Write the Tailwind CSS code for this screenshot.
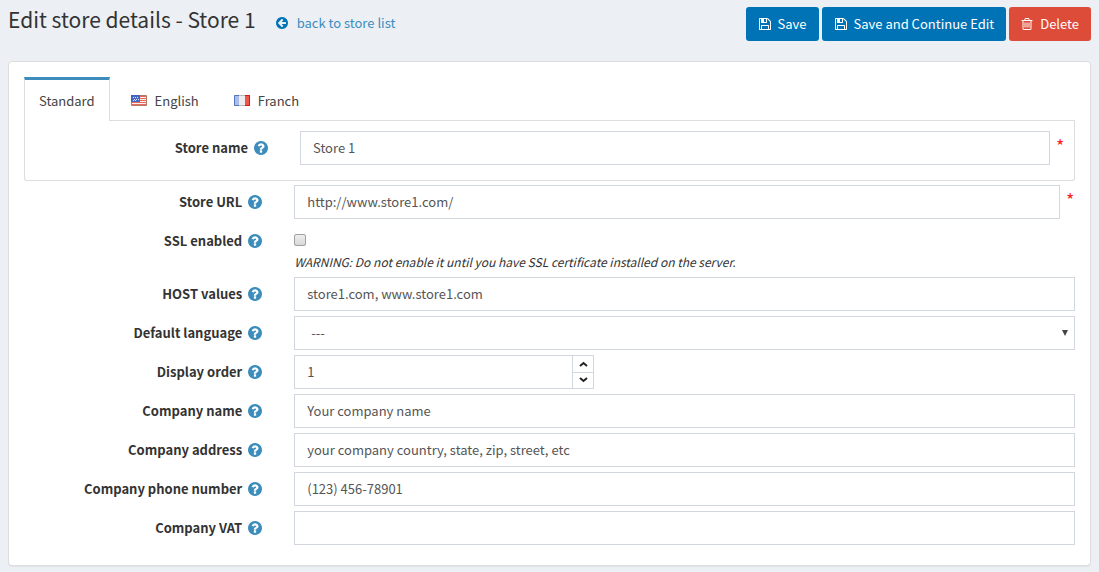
<!DOCTYPE html>
<html lang="en">
<head>
<meta charset="utf-8">
<title>Edit store details</title>
<script src="https://cdn.jsdelivr.net/npm/@tailwindcss/browser@4"></script>
</head>
<body class="min-h-screen bg-[#ecf0f5] font-['Noto_Sans_CJK_SC',sans-serif] text-[13px] leading-5 text-[#333]">
<svg class="hidden" aria-hidden="true">
  <symbol id="help" viewBox="128 128 1536 1536"><path d="M1024 1376v-192q0-14-9-23t-23-9h-192q-14 0-23 9t-9 23v192q0 14 9 23t23 9h192q14 0 23-9t9-23zm256-672q0-88-55.500-163t-138.500-116-170-41q-243 0-371 213-15 24 8 42l132 100q7 6 19 6 16 0 25-12 53-68 86-92 34-24 86-24 48 0 85.500 26t37.500 59q0 38-20 61t-68 45q-63 28-115.500 86.500t-52.500 125.500v36q0 14 9 23t23 9h192q14 0 23-9t9-23q0-19 21.500-49.500t54.500-49.500q32-18 49-28.500t46-35 44.500-48 28-60.500 12.500-81zm384 192q0 209-103 385.500t-279.500 279.500-385.500 103-385.500-103-279.500-279.500-103-385.500 103-385.500 279.500-279.500 385.500-103 385.500 103 279.500 279.500 103 385.500z"/></symbol>
  <symbol id="floppy" viewBox="0 0 1792 1792"><path d="M512 1536h768v-384h-768v384zm896 0h128v-896q0-14-10-38.500t-20-34.500l-281-281q-10-10-34-20t-39-10v416q0 40-28 68t-68 28h-576q-40 0-68-28t-28-68v-416h-128v1280h128v-416q0-40 28-68t68-28h832q40 0 68 28t28 68v416zm-384-928v-320q0-13-9.500-22.500t-22.500-9.500h-192q-13 0-22.500 9.500t-9.500 22.500v320q0 13 9.500 22.500t22.500 9.500h192q13 0 22.500-9.500t9.500-22.500zm640 32v928q0 40-28 68t-68 28h-1344q-40 0-68-28t-28-68v-1344q0-40 28-68t68-28h928q40 0 88 20t76 48l280 280q28 28 48 76t20 88z"/></symbol>
</svg>

<header class="flex items-start justify-between pt-[5px] pr-2 pb-5 pl-2">
  <h1 class="flex items-center text-[21px] leading-7">Edit store details - Store 1
    <small class="ml-5 flex items-center gap-[9px] pt-2 text-[13px] leading-5 text-[#3c8dbc]">
      <svg class="size-3 fill-[#0073b7]" viewBox="128 128 1536 1536"><path d="M1408 960v-128q0-26-19-45t-45-19h-502l189-189q19-19 19-45t-19-45l-91-91q-18-18-45-18t-45 18l-362 362-91 91q-18 18-18 45t18 45l91 91 362 362q18 18 45 18t45-18l91-91q18-18 18-45t-18-45l-189-189h502q26 0 45-19t19-45zm256-64q0 209-103 385.500t-279.500 279.500-385.500 103-385.500-103-279.500-279.500-103-385.500 103-385.500 279.500-279.500 385.500-103 385.500 103 279.500 279.500 103 385.500z"/></svg>
      <a href="#">back to store list</a>
    </small>
  </h1>
  <div class="mt-[2px] flex gap-[3px] text-white">
    <button class="flex h-[34px] items-center gap-[6px] rounded-[3px] bg-[#0073b7] px-3"><svg class="size-[14px] fill-current"><use href="#floppy"/></svg>Save</button>
    <button class="flex h-[34px] items-center gap-[6px] rounded-[3px] bg-[#0073b7] px-3"><svg class="size-[14px] fill-current"><use href="#floppy"/></svg>Save and Continue Edit</button>
    <button class="flex h-[34px] items-center gap-[7px] rounded-[3px] bg-[#dd4b39] px-3"><svg class="h-[14px] w-3 fill-current" viewBox="128 0 1536 1792"><path d="M704 736v576q0 14-9 23t-23 9h-64q-14 0-23-9t-9-23v-576q0-14 9-23t23-9h64q14 0 23 9t9 23zm256 0v576q0 14-9 23t-23 9h-64q-14 0-23-9t-9-23v-576q0-14 9-23t23-9h64q14 0 23 9t9 23zm256 0v576q0 14-9 23t-23 9h-64q-14 0-23-9t-9-23v-576q0-14 9-23t23-9h64q14 0 23 9t9 23zm128 724v-948h-896v948q0 22 7 40.500t14.500 27 10.500 8.500h832q3 0 10.500-8.500t14.500-27 7-40.500zm-672-1076h448l-48-117q-7-9-17-11h-317q-10 2-17 11zm928 32v64q0 14-9 23t-23 9h-96v948q0 83-47 143.500t-113 60.500h-832q-66 0-113-58.500t-47-141.500v-952h-96q-14 0-23-9t-9-23v-64q0-14 9-23t23-9h309l70-167q15-37 54-63t79-26h320q40 0 79 26t54 63l70 167h309q14 0 23 9t9 23z"/></svg>Delete</button>
  </div>
</header>

<main class="mx-2 rounded border border-[#ddd] bg-white pt-[15px] pb-5 shadow-[0_1px_1px_rgba(0,0,0,0.05)]">
  <form>
    <section class="mx-[15px]">
      <nav class="flex text-[#444]">
        <button type="button" class="h-11 border-x border-t-3 border-x-[#ddd] border-t-[#3c8dbc] px-[14px] pt-px">Standard</button>
        <div class="flex flex-1 border-b border-[#ddd]">
          <button type="button" class="flex items-center gap-2 pt-1 pr-[14px] pl-[21px]">
            <svg class="h-[11px] w-4" viewBox="0 0 16 11"><path fill="#f7eeee" d="M0 0h16v11H0z"/><path fill="#e8685a" d="M0 1h16v1H0zM0 3h16v1H0zM0 5h16v1H0zM0 7h16v1H0zM0 9h16v1H0z"/><path fill="#4468c4" d="M0 0h9v7H0z"/><path fill="#dce6fa" d="M2 2h1v1H2zM4 2h1v1H4zM6 2h1v1H6zM3 4h1v1H3zM5 4h1v1H5zM7 4h1v1H7zM2 5h1v1H2zM4 5h1v1H4z"/><path fill="none" stroke="#b5796a" d="M.5 7v3.500h15V.5H9"/><path fill="none" stroke="#4660b5" d="M.5 7V.5H9"/></svg>English</button>
          <button type="button" class="flex items-center gap-2 pt-1 pr-[14px] pl-[21px]">
            <svg class="h-[11px] w-4" viewBox="0 0 16 11"><path fill="#a9bde8" d="M0 0h5v11H0z"/><path fill="#ededed" d="M5 0h6v11H5z"/><path fill="#f0564c" d="M11 0h5v11h-5z"/><path fill="none" stroke="#5878bd" d="M5 .5H.5v10H5"/><path fill="none" stroke="#b9b9b9" d="M5 .5h6M5 10.500h6"/><path fill="none" stroke="#d01c14" d="M11 .5h4.500v10H11"/></svg>Franch</button>
        </div>
      </nav>
      <div class="flex rounded-b-[3px] border border-t-0 border-[#ddd] pt-[10px] pr-[9px] pb-[15px]">
        <div class="flex w-1/4 items-center justify-end gap-[6px] pr-[17px]"><label for="name" class="font-bold">Store name</label><svg class="size-[14px] fill-[#3c8dbc]"><use href="#help"/></svg></div>
        <div class="flex w-3/4 pl-[15px]"><input id="name" value="Store 1" class="h-[34px] min-w-0 flex-1 border border-[#d2d6de] px-3 pb-[2px] text-[#555]"><span class="w-[15px] pt-1 pl-[6px] text-[18px] text-[#f22]">*</span></div>
      </div>
    </section>

    <div class="mt-1 flex flex-col gap-[5px]">
      <div class="flex">
        <div class="flex w-1/4 items-center justify-end gap-[6px] pr-[17px]"><label for="url" class="font-bold">Store URL</label><svg class="size-[14px] fill-[#3c8dbc]"><use href="#help"/></svg></div>
        <div class="flex w-3/4 px-[15px]"><input id="url" value="http://www.store1.com/" class="h-[34px] min-w-0 flex-1 border border-[#d2d6de] px-3 pb-[2px] text-[#555]"><span class="w-[15px] pt-1 pl-[6px] text-[18px] text-[#f22]">*</span></div>
      </div>
      <div class="flex">
        <div class="flex h-[34px] w-1/4 items-center justify-end gap-[6px] pr-[17px]"><label for="ssl" class="font-bold">SSL enabled</label><svg class="size-[14px] fill-[#3c8dbc]"><use href="#help"/></svg></div>
        <div class="w-3/4 px-[15px] pt-[10px]"><input id="ssl" type="checkbox" class="block size-3 appearance-none rounded-xs border border-[#a0a0a0] bg-linear-to-b from-[#eee] to-[#d8d8d8]"><em class="mt-[6px] block text-[12px] leading-5">WARNING: Do not enable it until you have SSL certificate installed on the server.</em></div>
      </div>
      <div class="flex">
        <div class="flex w-1/4 items-center justify-end gap-[6px] pr-[17px]"><label for="host" class="font-bold">HOST values</label><svg class="size-[14px] fill-[#3c8dbc]"><use href="#help"/></svg></div>
        <div class="flex w-3/4 px-[15px]"><input id="host" value="store1.com, www.store1.com" class="h-[34px] min-w-0 flex-1 border border-[#d2d6de] px-3 pb-[2px] text-[#555]"></div>
      </div>
      <div class="flex">
        <div class="flex w-1/4 items-center justify-end gap-[6px] pr-[17px]"><label for="lang" class="font-bold">Default language</label><svg class="size-[14px] fill-[#3c8dbc]"><use href="#help"/></svg></div>
        <div class="w-3/4 px-[15px]"><div class="relative"><select id="lang" class="block h-[34px] w-full appearance-none border border-[#d2d6de] bg-white px-4 text-[#555]"><option>---</option></select><svg class="pointer-events-none absolute top-[14px] right-[7px] h-[6px] w-[6px] fill-[#444]" viewBox="0 0 6 6"><path d="M0 0h6L3 6z"/></svg></div></div>
      </div>
      <div class="flex">
        <div class="flex w-1/4 items-center justify-end gap-[6px] pr-[17px]"><label for="order" class="font-bold">Display order</label><svg class="size-[14px] fill-[#3c8dbc]"><use href="#help"/></svg></div>
        <div class="w-3/4 px-[15px]"><div class="flex h-[34px] w-[300px] border border-[#d2d6de]"><input id="order" value="1" class="min-w-0 flex-1 px-3 text-[#555]">
          <div class="flex w-[21px] flex-col divide-y divide-[#d2d6de] border-l border-[#d2d6de]">
            <button type="button" aria-label="Increase" class="flex flex-1 items-center justify-center"><svg class="h-[6px] w-[9px]" viewBox="0 0 9 6"><path d="M1 5l3.500-3L8 5" fill="none" stroke="#222" stroke-width="2"/></svg></button>
            <button type="button" aria-label="Decrease" class="flex flex-1 items-center justify-center"><svg class="h-[6px] w-[9px]" viewBox="0 0 9 6"><path d="M1 1l3.500 3L8 1" fill="none" stroke="#222" stroke-width="2"/></svg></button>
          </div></div></div>
      </div>
      <div class="flex">
        <div class="flex w-1/4 items-center justify-end gap-[6px] pr-[17px]"><label for="company" class="font-bold">Company name</label><svg class="size-[14px] fill-[#3c8dbc]"><use href="#help"/></svg></div>
        <div class="flex w-3/4 px-[15px]"><input id="company" value="Your company name" class="h-[34px] min-w-0 flex-1 border border-[#d2d6de] px-3 pb-[2px] text-[#555]"></div>
      </div>
      <div class="flex">
        <div class="flex w-1/4 items-center justify-end gap-[6px] pr-[17px]"><label for="address" class="font-bold">Company address</label><svg class="size-[14px] fill-[#3c8dbc]"><use href="#help"/></svg></div>
        <div class="flex w-3/4 px-[15px]"><input id="address" value="your company country, state, zip, street, etc" class="h-[34px] min-w-0 flex-1 border border-[#d2d6de] px-3 pb-[2px] text-[#555]"></div>
      </div>
      <div class="flex">
        <div class="flex w-1/4 items-center justify-end gap-[6px] pr-[17px]"><label for="phone" class="font-bold">Company phone number</label><svg class="size-[14px] fill-[#3c8dbc]"><use href="#help"/></svg></div>
        <div class="flex w-3/4 px-[15px]"><input id="phone" value="(123) 456-78901" class="h-[34px] min-w-0 flex-1 border border-[#d2d6de] px-3 pb-[2px] text-[#555]"></div>
      </div>
      <div class="flex">
        <div class="flex w-1/4 items-center justify-end gap-[6px] pr-[17px]"><label for="vat" class="font-bold">Company VAT</label><svg class="size-[14px] fill-[#3c8dbc]"><use href="#help"/></svg></div>
        <div class="flex w-3/4 px-[15px]"><input id="vat" class="h-[34px] min-w-0 flex-1 border border-[#d2d6de] px-3 pb-[2px] text-[#555]"></div>
      </div>
    </div>
  </form>
</main>
</body>
</html>
